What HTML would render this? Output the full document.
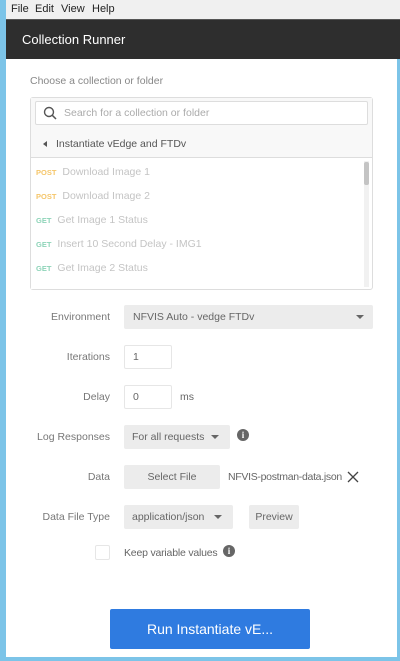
<!DOCTYPE html>
<html><head><style>
*{margin:0;padding:0;box-sizing:border-box}
body{width:400px;height:661px;background:#7cc4e8;font-family:"Liberation Sans",sans-serif;position:relative;overflow:hidden;font-size:10.5px;color:#666}
.a{position:absolute}
.menu{left:6px;top:0;width:394px;height:19px;background:#f0f0f0;font-size:11px;color:#222}
.menu span{position:absolute;top:3px}
.hdr{left:6px;top:19px;width:394px;height:40px;background:#2e2e2e;color:#fff;font-size:13px;border-top:1px solid #555}
.main{left:6px;top:59px;width:391px;height:598px;background:#fff}
.lbl{color:#777;text-align:right;width:100px;left:10px}
.box{background:#ececec;border-radius:2px}
.in{background:#fff;border:1px solid #e6e6e6;border-radius:2px}
.li{left:36px;color:#c4c4c4;font-size:10.5px}
.li b{font-size:7.5px;margin-right:6px}
.caret{width:0;height:0;border-left:4px solid transparent;border-right:4px solid transparent;border-top:4px solid #666}
.info{width:12px;height:12px;border-radius:50%;background:#666;color:#fff;font-size:9px;font-weight:bold;text-align:center;line-height:12px;font-family:"Liberation Serif",serif}
</style></head><body>
<div class="a menu"><span style="left:5px">File</span><span style="left:29px">Edit</span><span style="left:55px">View</span><span style="left:86px">Help</span></div>
<div class="a hdr"><span class="a" style="left:16px;top:12px">Collection Runner</span></div>
<div class="a main"></div>
<div class="a" style="left:30px;top:75px;color:#888">Choose a collection or folder</div>
<div class="a" style="left:30px;top:97px;width:343px;height:193px;border:1px solid #ddd;border-radius:3px;background:#fff"></div>
<div class="a" style="left:31px;top:98px;width:341px;height:60px;background:#f8f8f8;border-bottom:1px solid #ddd"></div>
<div class="a in" style="left:35px;top:101px;width:333px;height:24px;border-color:#ddd"></div>
<svg class="a" style="left:43px;top:106px" width="14" height="14"><circle cx="6" cy="6" r="4.5" fill="none" stroke="#555" stroke-width="1.4"/><line x1="9.3" y1="9.3" x2="13" y2="13" stroke="#555" stroke-width="1.5"/></svg>
<div class="a" style="left:64px;top:107px;color:#aaa">Search for a collection or folder</div>
<div class="a" style="left:43px;top:141px;width:0;height:0;border-top:3px solid transparent;border-bottom:3px solid transparent;border-right:4px solid #555"></div>
<div class="a" style="left:56px;top:138px;color:#555">Instantiate vEdge and FTDv</div>
<div class="a li" style="top:166px"><b style="color:#f5c66a">POST</b>Download Image 1</div>
<div class="a li" style="top:190px"><b style="color:#f5c66a">POST</b>Download Image 2</div>
<div class="a li" style="top:214px"><b style="color:#8ed4b8">GET</b>Get Image 1 Status</div>
<div class="a li" style="top:238px"><b style="color:#8ed4b8">GET</b>Insert 10 Second Delay - IMG1</div>
<div class="a li" style="top:262px"><b style="color:#8ed4b8">GET</b>Get Image 2 Status</div>
<div class="a" style="left:31px;top:283px;width:330px;height:6px;background:#fff"></div>
<div class="a" style="left:364px;top:161px;width:5px;height:126px;background:#f1f1f1"></div>
<div class="a" style="left:364px;top:162px;width:5px;height:23px;background:#c4c4c4;border-radius:2px"></div>

<div class="a lbl" style="top:311px">Environment</div>
<div class="a box" style="left:124px;top:305px;width:249px;height:24px"></div>
<div class="a" style="left:133px;top:311px;color:#666">NFVIS Auto - vedge FTDv</div>
<div class="a caret" style="left:356px;top:315px"></div>

<div class="a lbl" style="top:351px">Iterations</div>
<div class="a in" style="left:124px;top:345px;width:48px;height:24px"></div>
<div class="a" style="left:133px;top:351px">1</div>

<div class="a lbl" style="top:391px">Delay</div>
<div class="a in" style="left:124px;top:385px;width:48px;height:24px"></div>
<div class="a" style="left:133px;top:391px">0</div>
<div class="a" style="left:180px;top:391px">ms</div>

<div class="a lbl" style="top:431px">Log Responses</div>
<div class="a box" style="left:124px;top:425px;width:106px;height:24px"></div>
<div class="a" style="left:132px;top:431px">For all requests</div>
<div class="a caret" style="left:211px;top:435px"></div>
<div class="a info" style="left:237px;top:429px">i</div>

<div class="a lbl" style="top:471px">Data</div>
<div class="a box" style="left:124px;top:465px;width:96px;height:24px"></div>
<div class="a" style="left:124px;top:471px;width:96px;text-align:center">Select File</div>
<div class="a" style="left:228px;top:471px;letter-spacing:-0.3px">NFVIS-postman-data.json</div>
<svg class="a" style="left:347px;top:471px" width="12" height="12"><path d="M1 1L11 11M11 1L1 11" stroke="#444" stroke-width="1.3"/></svg>

<div class="a lbl" style="top:511px">Data File Type</div>
<div class="a box" style="left:124px;top:505px;width:109px;height:24px"></div>
<div class="a" style="left:132px;top:511px">application/json</div>
<div class="a caret" style="left:214px;top:515px"></div>
<div class="a box" style="left:249px;top:505px;width:50px;height:24px"></div>
<div class="a" style="left:249px;top:511px;width:50px;text-align:center">Preview</div>

<div class="a" style="left:95px;top:545px;width:15px;height:15px;border:1px solid #e6e6e6;border-radius:2px"></div>
<div class="a" style="left:124px;top:547px;letter-spacing:-0.2px">Keep variable values</div>
<div class="a info" style="left:223px;top:545px">i</div>

<div class="a" style="left:110px;top:609px;width:200px;height:40px;background:#2f7be0;border-radius:2px;color:#fff;font-size:14px;text-align:center;line-height:40px">Run Instantiate vE...</div>
</body></html>
